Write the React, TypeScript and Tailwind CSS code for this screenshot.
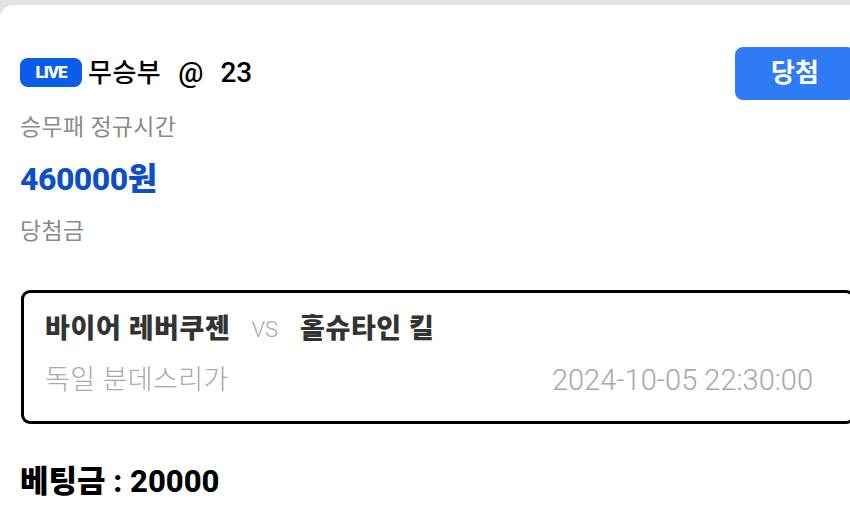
import React from "react";

const font = { fontFamily: "Roboto, 'Noto Sans CJK KR', sans-serif" };

function LiveBadge() {
  return (
    <span className="inline-flex items-center justify-center h-[29px] w-[62px] rounded-[8px] bg-[#0b5ce8] text-white text-[17px] font-black tracking-[-1px] leading-none">
      LIVE
    </span>
  );
}

export default function App() {
  return (
    <div className="w-[850px] h-[516px] overflow-hidden bg-[#e3e3e3] pt-[5px]" style={font}>
      <div className="w-[880px] h-full bg-white rounded-tl-[14px] pl-5 pr-[25px]">
        {/* pick header */}
        <div className="flex items-start justify-between pt-[42px]">
          <div className="flex flex-col">
            <div className="flex items-center mt-[11px] text-black font-medium leading-none">
              <LiveBadge />
              <span className="ml-[6px] text-[26px] tracking-[0.5px]">무승부</span>
              <span className="ml-[17px] text-[28px]">@</span>
              <span className="ml-[17px] text-[28px]">23</span>
            </div>
            <div className="mt-[29px] text-[23px] text-[#8a8a8a] leading-none tracking-[0.3px]">승무패 정규시간</div>
            <div className="mt-[24px] text-[32px] font-extrabold text-[#0b4fc9] leading-none tracking-[-0.5px]">460000원</div>
            <div className="mt-[25px] text-[23px] text-[#8a8a8a] leading-none tracking-[0.3px]">당첨금</div>
          </div>
          <button className="w-[120px] h-[53px] rounded-[8px] bg-[#2f7bf5] text-white text-[26px] font-bold">
            당첨
          </button>
        </div>

        {/* match card */}
        <div className="mt-[47px] ml-[1px] border-[3px] border-black rounded-[9px] pl-[21px] pr-[39px] pt-[23px] pb-[26px]">
          <div className="flex items-center text-[27px] font-extrabold text-[#333] leading-none tracking-[0.6px]">
            <span>바이어 레버쿠젠</span>
            <span className="ml-[21px] mr-[22px] text-[22px] font-light text-[#a8a8a8] tracking-normal">VS</span>
            <span>홀슈타인 킬</span>
          </div>
          <div className="mt-[23px] flex items-center justify-between font-light text-[#a8a8a8] leading-none">
            <span className="text-[27px] tracking-[0.4px]">독일 분데스리가</span>
            <span className="text-[29px]">2024-10-05 22:30:00</span>
          </div>
        </div>

        <div className="mt-[42px] text-[31px] font-extrabold text-black leading-none">베팅금 : 20000</div>
      </div>
    </div>
  );
}
